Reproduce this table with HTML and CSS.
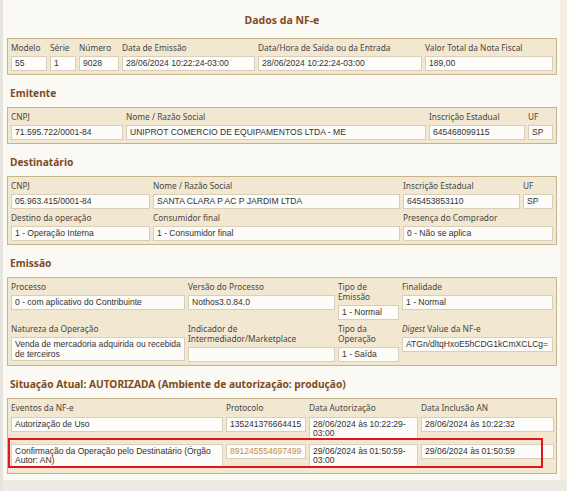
FILE: index.html
```html
<!DOCTYPE html>
<html lang="pt-BR">
<head>
<meta charset="utf-8">
<title>Dados da NF-e</title>
<link rel="stylesheet" href="styles.css">
</head>
<body>
<div class="page">
  <div class="edge"></div>
  <main class="content">
    <h1 class="title">Dados da NF-e</h1>
    <section class="box cols-nfe">
      <div class="cell"><span class="lbl">Modelo</span><span class="val">55</span></div>
      <div class="cell"><span class="lbl">Série</span><span class="val">1</span></div>
      <div class="cell"><span class="lbl">Número</span><span class="val">9028</span></div>
      <div class="cell"><span class="lbl">Data de Emissão</span><span class="val">28/06/2024 10:22:24-03:00</span></div>
      <div class="cell"><span class="lbl">Data/Hora de Saída ou da Entrada</span><span class="val">28/06/2024 10:22:24-03:00</span></div>
      <div class="cell"><span class="lbl">Valor Total da Nota Fiscal</span><span class="val">189,00</span></div>
    </section>

    <h2 class="sec">Emitente</h2>
    <section class="box cols-emit">
      <div class="cell"><span class="lbl">CNPJ</span><span class="val">71.595.722/0001-84</span></div>
      <div class="cell"><span class="lbl">Nome / Razão Social</span><span class="val">UNIPROT COMERCIO DE EQUIPAMENTOS LTDA - ME</span></div>
      <div class="cell"><span class="lbl">Inscrição Estadual</span><span class="val">645468099115</span></div>
      <div class="cell"><span class="lbl">UF</span><span class="val">SP</span></div>
    </section>

    <h2 class="sec">Destinatário</h2>
    <section class="box cols-dest">
      <div class="cell"><span class="lbl">CNPJ</span><span class="val">05.963.415/0001-84</span></div>
      <div class="cell"><span class="lbl">Nome / Razão Social</span><span class="val">SANTA CLARA P AC P JARDIM LTDA</span></div>
      <div class="cell"><span class="lbl">Inscrição Estadual</span><span class="val">645453853110</span></div>
      <div class="cell"><span class="lbl">UF</span><span class="val">SP</span></div>
      <div class="cell"><span class="lbl">Destino da operação</span><span class="val">1 - Operação Interna</span></div>
      <div class="cell"><span class="lbl">Consumidor final</span><span class="val">1 - Consumidor final</span></div>
      <div class="cell span2"><span class="lbl">Presença do Comprador</span><span class="val">0 - Não se aplica</span></div>
    </section>

    <h2 class="sec">Emissão</h2>
    <section class="box cols-emis">
      <div class="cell"><span class="lbl">Processo</span><span class="val">0 - com aplicativo do Contribuinte</span></div>
      <div class="cell"><span class="lbl">Versão do Processo</span><span class="val">Nothos3.0.84.0</span></div>
      <div class="cell"><span class="lbl">Tipo de Emissão</span><span class="val">1 - Normal</span></div>
      <div class="cell"><span class="lbl">Finalidade</span><span class="val">1 - Normal</span></div>
      <div class="cell"><span class="lbl">Natureza da Operação</span><span class="val tight">Venda de mercadoria adquirida ou recebida de terceiros</span></div>
      <div class="cell"><span class="lbl">Indicador de Intermediador/Marketplace</span><span class="val">&nbsp;</span></div>
      <div class="cell"><span class="lbl">Tipo da Operação</span><span class="val">1 - Saída</span></div>
      <div class="cell"><span class="lbl"><i>Digest</i> Value da NF-e</span><span class="val tight">ATGn/dltqHxoE5hCDG1kCmXCLCg=</span></div>
    </section>

    <h2 class="sec">Situação Atual: AUTORIZADA (Ambiente de autorização: produção)</h2>
    <section class="box cols-sit">
      <span class="lbl">Eventos da NF-e</span>
      <span class="lbl">Protocolo</span>
      <span class="lbl">Data Autorização</span>
      <span class="lbl">Data Inclusão AN</span>
      <span class="val">Autorização de Uso</span>
      <span class="val">135241376664415</span>
      <span class="val">28/06/2024 às 10:22:29-<wbr>03:00</span>
      <span class="val">28/06/2024 às 10:22:32</span>
      <span class="val">Confirmação da Operação pelo Destinatário (Órgão Autor: AN)</span>
      <span class="val link">891245554697499</span>
      <span class="val">29/06/2024 às 01:50:59-<wbr>03:00</span>
      <span class="val">29/06/2024 às 01:50:59</span>
      <div class="mark"></div>
    </section>
  </main>
  <div class="strip"></div>
</div>
<div class="foot">
  <div class="edge"></div>
  <div class="bars">
    <div class="bar b1"></div>
    <div class="gapbar"></div>
    <div class="bar b2"></div>
    <div class="bar b3"></div>
  </div>
</div>
</body>
</html>
```

FILE: styles.css
```css
* { box-sizing: border-box; }
html, body { margin: 0; padding: 0; }
body {
  background: #f5eee2;
  font-family: "Noto Sans", "DejaVu Sans", sans-serif;
  color: #444;
}
.page { display: flex; align-items: stretch; }
.edge {
  width: 3px;
  flex: none;
  background-color: #f4f1ec;
  background-image: radial-gradient(#d9d6d0 0.6px, transparent 0.8px);
  background-size: 2px 2px;
}
.content {
  width: 557px;
  flex: none;
  background: #fbf9f4;
  padding: 14px 3px 6px 4px;
  position: relative;
}
.strip { flex: 1; background: #f5eee2; }

.title {
  margin: 0 0 11px;
  text-align: center;
  font-size: 10.5px;
  line-height: 13px;
  font-weight: bold;
  color: #7d4c1f;
}
.sec {
  margin: 12px 0 7px 3px;
  font-size: 10.2px;
  line-height: 13px;
  font-weight: bold;
  color: #7d4c1f;
}
.box {
  background: #f2e8d1;
  border: 1px solid #c8b48c;
  padding: 4px 3px 3px 3px;
  display: grid;
  column-gap: 3px;
  row-gap: 4px;
  align-items: start;
  position: relative;
}
.cols-nfe  { grid-template-columns: 36px 26px 40px 133px 164px 128px; }
.cols-emit { grid-template-columns: 112px 300px 96px 25px; }
.cols-dest { grid-template-columns: 139px 247px 117px 30px; }
.cols-emis { grid-template-columns: 174px 147px 61px 151px; }
.cols-sit  { grid-template-columns: 212px 80px 109px 133px; padding-bottom: 6px; }
.cols-sit .lbl { margin-bottom: 0; }
.cols-sit .val { line-height: 9px; }
.span2 { grid-column: span 2; }

.cell { display: flex; flex-direction: column; }
.lbl {
  display: block;
  font-size: 8.3px;
  line-height: 10px;
  color: #474747;
  margin-bottom: 3px;
}
.val {
  display: block;
  background: #fdfcf8;
  border: 1px solid #d8cfba;
  padding: 2px 3px 1px;
  font-family: "Liberation Sans", Arial, sans-serif;
  font-size: 8.55px;
  line-height: 9.5px;
  color: #333;
  min-height: 15px;
}
.val.tight { padding-right: 0; }
.link { color: #c38c4f; }
.mark {
  position: absolute;
  left: 0;
  top: 39px;
  width: 535px;
  height: 30px;
  border: 2px solid #e3141b;
}

.foot { display: flex; height: 15px; }
.foot .edge { width: 3px; }
.bars {
  flex: 1;
  display: flex;
  align-items: flex-end;
  background-color: #f6f3ee;
  background-image: radial-gradient(#e2ded7 0.6px, transparent 0.8px);
  background-size: 2px 2px;
}
.bar { height: 4px; }
.b1 { width: 134px; margin-left: 2px; background: #ecdcc1; }
.gapbar { width: 93px; }
.b2 { width: 147px; background: #eee2cd; }
.b3 { width: 180px; margin-left: 3px; background: #ecdcc1; }
```
